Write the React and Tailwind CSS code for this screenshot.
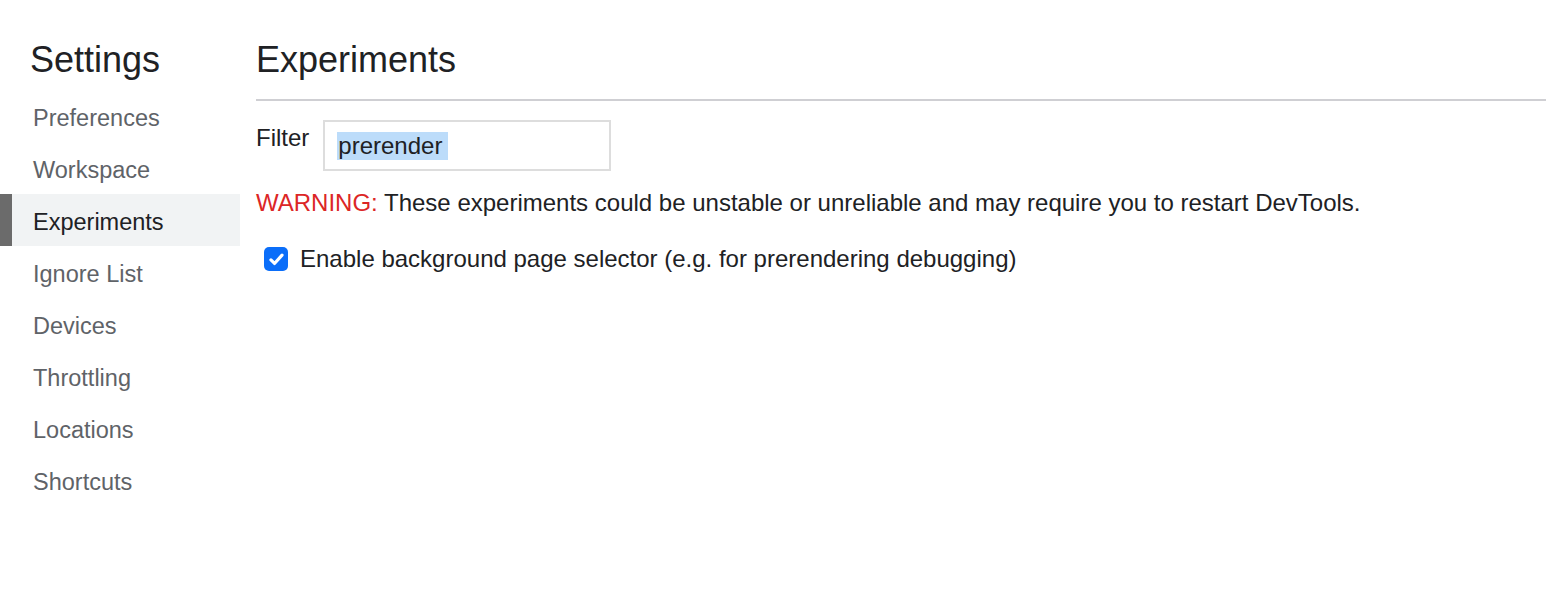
import React from 'react';

const navItems = ['Preferences', 'Workspace', 'Experiments', 'Ignore List', 'Devices', 'Throttling', 'Locations', 'Shortcuts'];

export default function App() {
  return (
    <div
      className="flex w-[1546px] h-[598px] bg-white text-[#202124] overflow-hidden"
      style={{ fontFamily: '"Liberation Sans", Arial, sans-serif' }}
    >
      <aside className="w-[240px] shrink-0 pt-[38px]">
        <h1 className="pl-[30px] text-[36px] leading-[44px] mb-[8px]">Settings</h1>
        <nav className="flex flex-col">
          {navItems.map((item) => {
            const active = item === 'Experiments';
            return (
              <div
                key={item}
                className={`relative h-[52px] flex items-center pl-[33px] pt-[5px] text-[23.5px] ${
                  active ? 'bg-[#f1f3f4] text-[#202124]' : 'text-[#5f6368]'
                }`}
              >
                {active && <span className="absolute left-0 top-0 bottom-0 w-[12px] bg-[#6b6b6b]" />}
                {item}
              </div>
            );
          })}
        </nav>
      </aside>

      <main className="flex-1 pl-[16px] pt-[38px]">
        <h2 className="text-[36px] leading-[44px] pb-[17px] border-b-2 border-[#cfcfd3]">Experiments</h2>

        <div className="flex items-start mt-[19px]">
          <label className="text-[24px] leading-[38px] mr-[14px] -mt-[1px]">Filter</label>
          <div className="w-[288px] h-[51px] border-2 border-[#dddddd] flex items-center pl-[12px] pt-[1px]">
            <span className="bg-[#bcdcfa] text-[24px] leading-[28px] px-[1px] pr-[6px]">prerender</span>
          </div>
        </div>

        <p className="mt-[17px] text-[24px] leading-[30px]">
          <span className="text-[#dc2626]">WARNING:</span> These experiments could be unstable or unreliable and may require you to restart DevTools.
        </p>

        <label className="flex items-center mt-[27px] ml-[8px] text-[24px] leading-[28px]">
          <span className="w-[24px] h-[24px] rounded-[5px] bg-[#0b6ef9] flex items-center justify-center mr-[12px]">
            <svg viewBox="0 0 24 24" className="w-[19px] h-[19px]" fill="none" stroke="white" strokeWidth="4" strokeLinecap="round" strokeLinejoin="round">
              <path d="M5 12.5l4.5 4.5L19 6.5" />
            </svg>
          </span>
          Enable background page selector (e.g. for prerendering debugging)
        </label>
      </main>
    </div>
  );
}
